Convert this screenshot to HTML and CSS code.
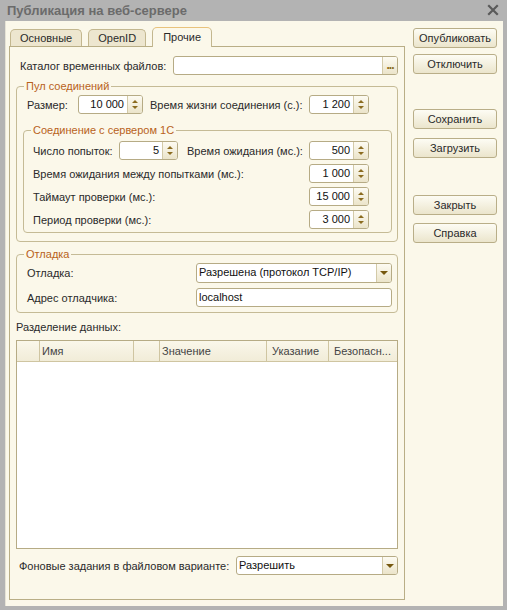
FILE: index.html
```html
<!DOCTYPE html>
<html lang="ru">
<head>
    <meta charset="UTF-8">
    <title>Публикация на веб-сервере</title>
    <link rel="stylesheet" href="styles.css">
</head>
<body>

    <div class="window">
        <div class="titlebar">
            <span class="title">Публикация на веб-сервере</span>
            <svg class="close" width="12" height="12" viewBox="0 0 12 12">
                <path d="M2 2 L10 10 M10 2 L2 10" stroke="#5a5a5a" stroke-width="2.2" stroke-linecap="square"/>
            </svg>
        </div>

        <div class="client">
            <div class="tabbook">
                <div class="tabs">
                    <div class="tab">Основные</div>
                    <div class="tab">OpenID</div>
                    <div class="tab active">Прочие</div>
                </div>

                <div class="page">
                    <div class="row catalog">
                        <span>Каталог временных файлов:</span>
                        <div class="field wide">
                            <span class="val"></span>
                            <span class="btn-dots">...</span>
                        </div>
                    </div>

                    <fieldset class="group pool">
                        <legend>Пул соединений</legend>
                        <div class="row pad10">
                            <span class="lbl w51">Размер:</span>
                            <div class="spin w65"><span class="val">10 000</span><span class="arrows"></span></div>
                            <span class="lbl w159 ml7">Время жизни соединения (с.):</span>
                            <div class="spin w60"><span class="val">1 200</span><span class="arrows"></span></div>
                        </div>

                        <fieldset class="group inner">
                            <legend>Соединение с сервером 1С</legend>
                            <div class="row pad9">
                                <span class="lbl w86">Число попыток:</span>
                                <div class="spin w59"><span class="val">5</span><span class="arrows"></span></div>
                                <span class="lbl w122 ml9">Время ожидания (мс.):</span>
                                <div class="spin w60"><span class="val">500</span><span class="arrows"></span></div>
                            </div>
                            <div class="row pad9">
                                <span class="lbl w276">Время ожидания между попытками (мс.):</span>
                                <div class="spin w60"><span class="val">1 000</span><span class="arrows"></span></div>
                            </div>
                            <div class="row pad9">
                                <span class="lbl w276">Таймаут проверки (мс.):</span>
                                <div class="spin w60"><span class="val">15 000</span><span class="arrows"></span></div>
                            </div>
                            <div class="row pad9">
                                <span class="lbl w276">Период проверки (мс.):</span>
                                <div class="spin w60"><span class="val">3 000</span><span class="arrows"></span></div>
                            </div>
                        </fieldset>
                    </fieldset>

                    <fieldset class="group debug">
                        <legend>Отладка</legend>
                        <div class="row pad10 tall">
                            <span class="lbl w169">Отладка:</span>
                            <div class="field w196">
                                <span class="val">Разрешена (протокол TCP/IP)</span>
                                <span class="drop"></span>
                            </div>
                        </div>
                        <div class="row pad10 gap7">
                            <span class="lbl w169">Адрес отладчика:</span>
                            <div class="field w196"><span class="val">localhost</span></div>
                        </div>
                    </fieldset>

                    <div class="caption">Разделение данных:</div>

                    <div class="grid">
                        <div class="grid-head">
                            <div class="cell"></div>
                            <div class="cell">Имя</div>
                            <div class="cell"></div>
                            <div class="cell">Значение</div>
                            <div class="cell pl5">Указание</div>
                            <div class="cell pl5">Безопасн...</div>
                        </div>
                    </div>

                    <div class="row bottom">
                        <span class="lbl">Фоновые задания в файловом варианте:</span>
                        <div class="field w162">
                            <span class="val">Разрешить</span>
                            <span class="drop"></span>
                        </div>
                    </div>
                </div>
            </div>

            <div class="actions">
                <button class="btn">Опубликовать</button>
                <button class="btn mt6">Отключить</button>
                <button class="btn mt35">Сохранить</button>
                <button class="btn mt9">Загрузить</button>
                <button class="btn mt37">Закрыть</button>
                <button class="btn mt8">Справка</button>
            </div>
        </div>
    </div>

</body>
</html>
```

FILE: styles.css
```css
* {
    margin: 0;
    padding: 0;
    box-sizing: border-box;
    font-family: 'Liberation Sans', Arial, sans-serif;
}

body {
    background-color: #b3b3b3;
    overflow: hidden;
}

.window {
    width: 507px;
    height: 610px;
    display: flex;
    flex-direction: column;
    padding: 0 4px 4px 5px;
    background: #b3b3b3;
    font-size: 11px;
    color: #2a2a2a;
}

.titlebar {
    height: 21px;
    display: flex;
    align-items: center;
    justify-content: space-between;
    padding: 0 4px 1px 2px;
}

.title {
    font-size: 13px;
    font-weight: bold;
    color: #6b6b6b;
}

.client {
    flex: 1;
    display: flex;
    gap: 8px;
    padding: 6px 0 0 4px;
    background: #fbf8ea;
    border-left: 1px solid #e6e3d6;
}

/* tabs */

.tabbook {
    width: 396px;
    display: flex;
    flex-direction: column;
    margin-left: -1px;
}

.tabs {
    height: 19px;
    display: flex;
    align-items: flex-end;
    gap: 6px;
    padding-left: 1px;
}

.tab {
    height: 17px;
    padding: 0 9px;
    line-height: 16px;
    background: #ede6cf;
    border: 1px solid #c3b78f;
    border-bottom: none;
    border-radius: 5px 5px 0 0;
    color: #2a2a2a;
}

.tab.active {
    height: 20px;
    margin-bottom: -1px;
    padding: 0 10px;
    line-height: 19px;
    background: #fbf8ea;
    border-top-color: #e8c27c;
    position: relative;
    z-index: 1;
}

.page {
    height: 554px;
    display: flex;
    flex-direction: column;
    padding: 9px 6px 0 6px;
    border: 1px solid #b9ae86;
}

/* rows and fields */

.row {
    display: flex;
    align-items: center;
    height: 19px;
    white-space: nowrap;
}

.catalog {
    padding-left: 4px;
}

.catalog .wide {
    margin-left: auto;
    width: 225px;
}

.pad10 { padding-left: 10px; }
.pad9 { padding-left: 9px; }
.ml7 { margin-left: 7px; }
.ml9 { margin-left: 9px; }

.lbl { flex-shrink: 0; }
.w51 { width: 51px; }
.w86 { width: 86px; }
.w122 { width: 122px; }
.w159 { width: 159px; }
.w169 { width: 169px; }
.w276 { width: 276px; }

.field,
.spin {
    height: 19px;
    display: flex;
    background: #fff;
    border: 1px solid #b6ab85;
    border-radius: 3px;
    overflow: hidden;
}

.field .val {
    flex: 1;
    padding-left: 2px;
    line-height: 17px;
    color: #111;
}

.w59 { width: 59px; }
.w60 { width: 60px; }
.w65 { width: 65px; }
.w162 { width: 162px; }
.w196 { width: 196px; }

.spin .val {
    flex: 1;
    text-align: right;
    padding-right: 3px;
    line-height: 17px;
    color: #111;
}

.spin .arrows,
.field .drop,
.btn-dots {
    width: 15px;
    border-left: 1px solid #d3caa8;
    background: linear-gradient(#fdfbf2, #ebe4ca);
    position: relative;
}

.spin .arrows::before,
.spin .arrows::after {
    content: "";
    position: absolute;
    left: 4px;
    border-left: 3px solid transparent;
    border-right: 3px solid transparent;
}

.spin .arrows::before {
    top: 4px;
    border-bottom: 3px solid #8b6c20;
}

.spin .arrows::after {
    top: 10px;
    border-top: 3px solid #8b6c20;
}

.field .drop::after {
    content: "";
    position: absolute;
    left: 3px;
    top: 7px;
    border-left: 4px solid transparent;
    border-right: 4px solid transparent;
    border-top: 4px solid #76580f;
}

.btn-dots {
    font-size: 12px;
    font-weight: bold;
    line-height: 16px;
    text-align: center;
    color: #8a6a18;
    letter-spacing: -1px;
}

/* groups */

.group {
    border: 1px solid #c5bb96;
    border-radius: 4px;
}

.group legend {
    margin-left: 7px;
    padding: 0 2px;
    line-height: 14px;
    color: #b8621b;
}

.pool {
    margin-top: 4px;
    padding: 2px 0 8px 0;
}

.inner {
    margin: 9px 5px 0 6px;
    padding: 4px 0 3px 0;
}

.inner .row + .row {
    margin-top: 4px;
}

.debug {
    margin-top: 5px;
    padding: 2px 0 5px 0;
}

.debug .tall {
    height: 20px;
}

.debug .tall .field {
    height: 20px;
}

.gap7 {
    margin-top: 5px;
}

.caption {
    margin-top: 7px;
    line-height: 14px;
}

/* table */

.grid {
    flex: 1;
    max-height: 209px;
    margin-top: 6px;
    background: #fff;
    border: 1px solid #b6ab85;
}

.grid-head {
    height: 21px;
    display: grid;
    grid-template-columns: 23px 94px 26px 107px 62px 1fr;
    background: linear-gradient(#faf7ea, #f1ecd8);
    border-bottom: 1px solid #cfc5a1;
}

.cell {
    padding-left: 2px;
    line-height: 20px;
    color: #444;
    border-right: 1px solid #cfc5a1;
    white-space: nowrap;
    overflow: hidden;
}

.cell:last-child {
    border-right: none;
}

.pl5 { padding-left: 5px; }

.bottom {
    margin-top: 7px;
    padding-left: 3px;
}

.bottom .field {
    margin-left: auto;
}

/* side buttons */

.actions {
    width: 84px;
    display: flex;
    flex-direction: column;
    padding-top: 1px;
}

.btn {
    height: 20px;
    font-size: 11px;
    color: #2a2a2a;
    background: linear-gradient(#fdfcf4, #ebe5cc);
    border: 1px solid #b9ae88;
    border-radius: 3px;
}

.mt6 { margin-top: 6px; }
.mt8 { margin-top: 8px; }
.mt9 { margin-top: 9px; }
.mt35 { margin-top: 35px; }
.mt37 { margin-top: 37px; }
```
